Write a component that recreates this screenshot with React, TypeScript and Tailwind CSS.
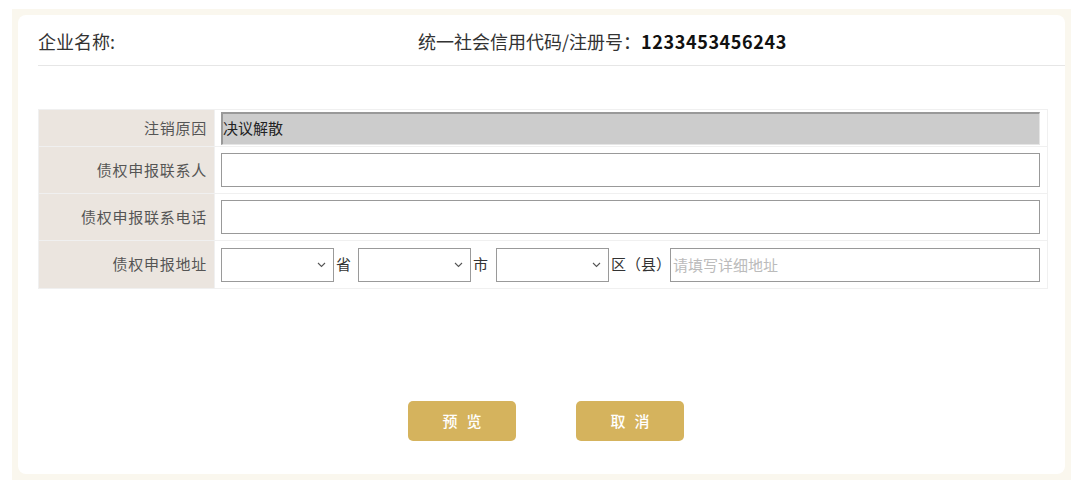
import React from 'react';

const font = { fontFamily: '"Noto Sans CJK SC", "Noto Sans", sans-serif' };

function Chevron() {
  return (
    <svg className="pointer-events-none absolute right-[7px] top-1/2 -translate-y-1/2" width="9" height="6" viewBox="0 0 9 6">
      <path d="M1 1l3.5 3.5L8 1" fill="none" stroke="#555" strokeWidth="1.1" />
    </svg>
  );
}

function FakeSelect() {
  return (
    <div className="relative h-[34px] w-[113px] border border-[#9a9a9a] bg-white">
      <Chevron />
    </div>
  );
}

export default function App() {
  const label = 'bg-[#ebe5df] text-right pr-[7px] text-[15px] tracking-[0.75px] text-[#555] border border-[#f0f0f0]';
  const cell = 'border border-[#f0f0f0] pl-[6px] pr-[7px]';

  return (
    <div className="w-[1080px] h-[487px] bg-white pt-[9px] pl-[12px]" style={font}>
      <div className="w-[1059px] h-[471px] bg-[#faf7ee] p-[6px]">
        <div className="h-full bg-white rounded-[8px] flex flex-col">
          {/* header */}
          <div className="ml-[20px] h-[51px] pt-[13px] flex border-b border-[#e6e6e6] text-[18px] text-[#333]">
            <div className="w-[380px]">企业名称:</div>
            <div>
              统一社会信用代码/注册号：<span className="font-bold text-[#111] tracking-[0.6px]">1233453456243</span>
            </div>
          </div>

          {/* form */}
          <table className="ml-[20px] mt-[43px] w-[1010px] border-collapse">
            <tbody>
              <tr className="h-[37px]">
                <td className={`${label} w-[176px]`}>注销原因</td>
                <td className={`${cell} py-[1px]`}>
                  <div className="h-[33px] bg-[#cccccc] border-t-2 border-l-2 border-[#999] border-b border-r border-b-[#e5e5e5] border-r-[#e5e5e5] text-[15px] text-[#222] flex items-center">
                    决议解散
                  </div>
                </td>
              </tr>
              <tr className="h-[47px]">
                <td className={label}>债权申报联系人</td>
                <td className={cell}>
                  <input className="block w-full h-[34px] border border-[#999] outline-none" />
                </td>
              </tr>
              <tr className="h-[47px]">
                <td className={label}>债权申报联系电话</td>
                <td className={cell}>
                  <input className="block w-full h-[34px] border border-[#999] outline-none" />
                </td>
              </tr>
              <tr className="h-[48px]">
                <td className={label}>债权申报地址</td>
                <td className={cell}>
                  <div className="flex items-center text-[15px] text-[#333]">
                    <FakeSelect />
                    <span className="ml-[2px] w-[22px]">省</span>
                    <FakeSelect />
                    <span className="ml-[2px] w-[23px]">市</span>
                    <FakeSelect />
                    <span className="ml-[2px] w-[59px]">区（县）</span>
                    <input
                      placeholder="请填写详细地址"
                      className="flex-1 h-[34px] border border-[#999] outline-none pl-[2px] text-[15px] placeholder:text-[#bbb]"
                    />
                  </div>
                </td>
              </tr>
            </tbody>
          </table>

          {/* actions */}
          <div className="mt-[112px] pl-[390px] flex gap-[60px]">
            <button className="w-[108px] h-[40px] rounded-[5px] bg-[#d5b35d] text-white text-[15px] font-medium tracking-[0.6em] pl-[0.6em]">
              预览
            </button>
            <button className="w-[108px] h-[40px] rounded-[5px] bg-[#d5b35d] text-white text-[15px] font-medium tracking-[0.6em] pl-[0.6em]">
              取消
            </button>
          </div>
        </div>
      </div>
    </div>
  );
}
